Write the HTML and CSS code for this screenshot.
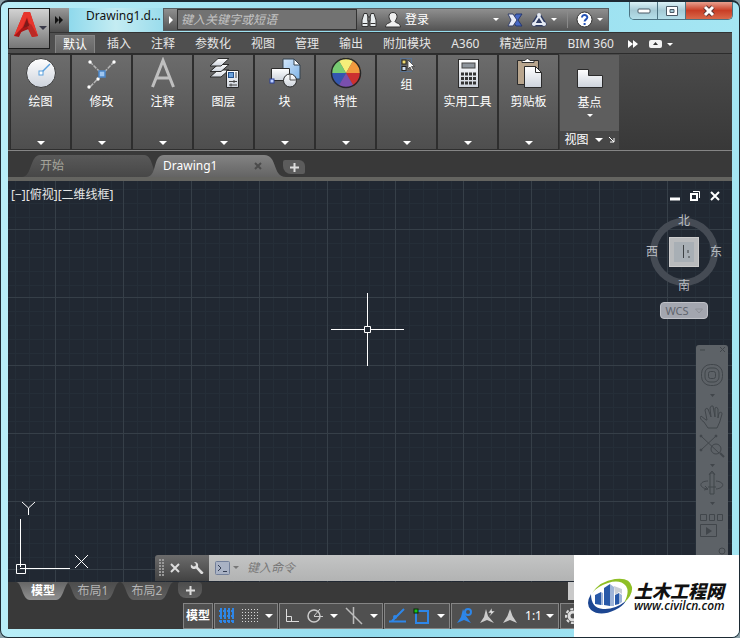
FILE: index.html
```html
<!doctype html>
<html lang="zh-CN">

<head>
    <meta charset="utf-8" />
    <meta name="viewport" content="width=device-width, initial-scale=1" />
    <title>Drawing1.dwg</title>
    <link rel="stylesheet" href="styles.css">
</head>

<body>
    <svg class="defs" width="0" height="0">
        <defs>
            <linearGradient id="paper" x1="0" y1="0" x2="0" y2="1">
                <stop offset="0" stop-color="#fff" />
                <stop offset="1" stop-color="#cdd3dc" />
            </linearGradient>
            <linearGradient id="blue" x1="0" y1="0" x2="1" y2="1">
                <stop offset="0" stop-color="#d5e8fb" />
                <stop offset="1" stop-color="#7fb4e8" />
            </linearGradient>
        </defs>
    </svg>

    <header class="titlebar">
        <button class="app-button" aria-label="应用程序菜单">
            <svg width="39" height="39" viewBox="0 0 39 39">
                <path d="M4 27 L14 3 H20 L28 27 L22 28 L18 20 Q12 20 9 27 Z" fill="#d9241f" />
                <path d="M14 3 H20 L28 27 L23 25 L17 8 L10 23 L4 27 Z" fill="#e8352c" />
                <path d="M4 27 L12 19 L19 14 L21 19 L11 23 L9 28 Z" fill="#a81616" />
                <path d="M17 17 L21 15 L28 27 L22 28 Z" fill="#bc2a25" />
                <path d="M17 9 L13 19 L19 17 Z" fill="#7d1a1a" />
                <path d="M29 17 h8 l-4 4 z" fill="#3b3b4a" />
            </svg>
        </button>
        <button class="quick" aria-label="更多工具">
            <svg width="8" height="8"><path d="M0 0 l4 4 l-4 4z M4 0 l4 4 l-4 4z" fill="#111" /></svg>
        </button>
        <div class="title">Drawing1.d...</div>
        <div class="infocenter">
            <button class="expand" aria-label="展开"><svg width="4" height="8"><path d="M0 0 l4 4 l-4 4z" fill="#fff" /></svg></button>
            <input class="search" type="text" aria-label="搜索" placeholder="键入关键字或短语">
            <button class="tool" aria-label="查找">
                <svg width="16" height="16" viewBox="0 0 16 16" fill="#e8ecee" stroke="#333">
                    <path d="M3 1.5 h3 l1 4 v9 H1 V8z M10 1.5 h3 L15 8 v6.5 H9 v-9z" />
                    <path d="M7 5 h2 v4 h-2z M1.500 11.500 h5 M9.500 11.500 h5" fill="#999" />
                </svg>
            </button>
            <button class="login">
                <svg width="16" height="16" viewBox="0 0 16 16" fill="#f0f0f0" stroke="#333">
                    <path d="M8 .5 c3 0 4 2 4 4 c0 2-1 3-2 5 c1 2 5 1 5.500 5.500 H.5 C1 10.500 5 11.500 6 9.500 C5 8 4 6.500 4 4.500 C4 2.500 5 .5 8 .5z" />
                </svg>
                登录
            </button>
            <span class="caret"></span>
            <button class="tool" aria-label="Exchange">
                <svg width="16" height="16" viewBox="0 0 16 16">
                    <path d="M9 2 h6 l-4 6 l4 6 H9 L5 8z" fill="#4768c4" stroke="#26386f" />
                    <path d="M1 2 h5 l4 6 l-4 6 H1 l3-6z" fill="#e7eaf6" stroke="#34406b" />
                </svg>
            </button>
            <button class="tool share" aria-label="连接">
                <svg width="16" height="16" viewBox="0 0 16 16">
                    <path d="M8 4 L13 12 H3z" fill="none" stroke="#2f3c63" stroke-width="5" stroke-linejoin="round" />
                    <path d="M8 4 L13 12 H3z" fill="none" stroke="#e6ebf4" stroke-width="2" />
                    <g fill="#e6ebf4"><circle cx="8" cy="3" r="2" /><circle cx="3" cy="12" r="2" /><circle cx="13" cy="12" r="2" /></g>
                </svg>
            </button>
            <span class="caret"></span>
            <button class="tool help" aria-label="帮助">
                <svg width="17" height="17" viewBox="0 0 17 17">
                    <circle cx="8.500" cy="8.500" r="7.500" fill="#fff" stroke="#333" />
                    <path d="M6 6.500 C6 3 11.500 3.300 11.300 6.500 C11.200 8.300 8.600 8.500 8.600 10.500 M8.600 12 v2" fill="none" stroke="#2452b5" stroke-width="2" />
                </svg>
            </button>
            <span class="caret"></span>
        </div>
        <div class="window-buttons">
            <button aria-label="最小化"><svg width="14" height="8"><rect x="1" y="2" width="12" height="4" rx="1" fill="#fff" stroke="#4a5a66" /></svg></button>
            <button aria-label="最大化"><svg width="14" height="12"><path d="M1.500 1.500 h11 v9 h-11z M5 4.500 v3 h4 v-3z" fill="#fff" stroke="#4a5a66" fill-rule="evenodd" /></svg></button>
            <button class="close" aria-label="关闭"><svg width="14" height="12" viewBox="0 0 14 12"><path d="M3 2 L11 10 M11 2 L3 10" stroke="#5b3535" stroke-width="5" /><path d="M3 2 L11 10 M11 2 L3 10" stroke="#fff" stroke-width="3" /></svg></button>
        </div>
    </header>

    <main class="window">
        <nav class="ribbon-tabs">
            <button class="active">默认</button>
            <button>插入</button>
            <button>注释</button>
            <button>参数化</button>
            <button>视图</button>
            <button>管理</button>
            <button>输出</button>
            <button>附加模块</button>
            <button>A360</button>
            <button>精选应用</button>
            <button>BIM 360</button>
            <button class="icon-tab" aria-label="更多"><svg width="10" height="8"><path d="M0 0 l5 4 l-5 4z M5 0 l5 4 l-5 4z" fill="#fff" /></svg></button>
            <button class="icon-tab" aria-label="最小化功能区">
                <svg width="13" height="8"><rect width="13" height="8" rx="2" fill="#f2f2f2" /><path d="M4 5 h5 l-2.500-3z" fill="#333" /></svg>
                <span class="caret"></span>
            </button>
        </nav>

        <section class="ribbon">
            <button class="panel">
                <svg width="32" height="32" viewBox="0 0 32 32"><circle cx="16" cy="16" r="14.500" fill="url(#paper)" stroke="#3b3b3b" /><path d="M17 15 L25 7" stroke="#5aa0dd" stroke-width="1.500" /><rect x="14" y="14" width="4" height="4" fill="#fff" stroke="#5aa0dd" /></svg>
                <span>绘图</span><i class="drop"></i>
            </button>
            <button class="panel">
                <svg width="32" height="32" viewBox="0 0 32 32"><path d="M4 5 L16 17 M28 5 L3 31" stroke="#b5b5b5" stroke-width="1.500" stroke-dasharray="4 1" /><g fill="#fff"><circle cx="4" cy="5" r="1.700" /><circle cx="28" cy="5" r="1.700" /><circle cx="3" cy="30" r="1.700" /><circle cx="12" cy="22" r="1.700" /></g><rect x="13" y="14" width="6" height="6" fill="#9fc6f0" stroke="#4b86c9" stroke-width="1.500" /></svg>
                <span>修改</span><i class="drop"></i>
            </button>
            <button class="panel">
                <svg width="32" height="32" viewBox="0 0 32 32"><path d="M5.500 30 L16 3.500 L26.500 30 M9 21 H23" fill="none" stroke="#bfbfbf" stroke-width="3" /></svg>
                <span>注释</span><i class="drop"></i>
            </button>
            <button class="panel">
                <svg width="32" height="32" viewBox="0 0 32 32"><g fill="url(#paper)" stroke="#2b2b2b"><path d="M2 20 l8-7 h11 l-8 7z" /><path d="M2 14.500 l8-7 h11 l-8 7z" /><path d="M2 9 l8-7.500 h11 l-8 7.500z" /><path d="M18.500 13.500 h12 v17 h-12z" /></g><rect x="20.500" y="15.500" width="5" height="5" fill="#6ba2dc" stroke="#26538d" /><path d="M28 15 v6 M21 24.500 h8 M21 28 h8 M26 23 v3 M23 26.500 v3" stroke="#444" /></svg>
                <span>图层</span><i class="drop"></i>
            </button>
            <button class="panel">
                <svg width="32" height="32" viewBox="0 0 32 32"><path d="M14 2 h11 l6 6 v14 H14z" fill="url(#blue)" stroke="#34424f" /><path d="M25 2 v6 h6z" fill="#fff" stroke="#34424f" /><path d="M2.500 11.500 h18 v12 h-18z" fill="url(#paper)" stroke="#2b2b2b" /><circle cx="21" cy="23.500" r="6.500" fill="url(#paper)" stroke="#2b2b2b" /><path d="M21 23 v-6 M21 23 h6" stroke="#555" /><rect x="1" y="22" width="4" height="4" fill="#bcd0ff" stroke="#283f99" /></svg>
                <span>块</span><i class="drop"></i>
            </button>
            <button class="panel">
                <svg width="32" height="32" viewBox="0 0 32 32"><path d="M16 16 L8.500 3 A15 15 0 0 1 23.500 3z" fill="#f6ee7a" /><path d="M16 16 L23.500 3 A15 15 0 0 1 31 16z" fill="#f19a3e" /><path d="M16 16 H31 A15 15 0 0 1 23.500 29z" fill="#cc3030" /><path d="M16 16 L23.500 29 A15 15 0 0 1 8.500 29z" fill="#7a4fae" /><path d="M16 16 L8.500 29 A15 15 0 0 1 1 16z" fill="#3357b0" /><path d="M16 16 H1 A15 15 0 0 1 8.500 3z" fill="#77cc72" /><circle cx="16" cy="16" r="14.500" fill="none" stroke="#272727" stroke-width="1.500" /></svg>
                <span>特性</span><i class="drop"></i>
            </button>
            <button class="panel small">
                <svg width="16" height="16" viewBox="0 0 16 16"><rect x="1.500" y="1.500" width="11" height="13" fill="none" stroke="#4778b8" stroke-dasharray="1 1" /><rect x="3" y="3" width="4" height="4" fill="#f2dc72" stroke="#222" /><rect x="3" y="9.500" width="4" height="4" fill="#cddcf0" stroke="#222" /><path d="M9 3 v9 l2-2 l2 4 l1.500-1 l-2-3.500 h3z" fill="#fff" stroke="#333" stroke-width=".7" /></svg>
                <span>组</span><i class="drop"></i>
            </button>
            <button class="panel">
                <svg width="32" height="32" viewBox="0 0 32 32"><rect x="6.500" y="2.500" width="20" height="28" fill="url(#paper)" stroke="#2b2b2b" /><rect x="10" y="6" width="13" height="5" fill="#8e959c" stroke="#444" /><path d="M9 17 h15 M9 21.500 h15 M9 26 h15" stroke="#333" stroke-width="3" stroke-dasharray="3 1" /></svg>
                <span>实用工具</span><i class="drop"></i>
            </button>
            <button class="panel">
                <svg width="32" height="32" viewBox="0 0 32 32"><path d="M4.500 3.500 h21 v24 h-21z" fill="#b8a58d" stroke="#2b2b2b" /><path d="M9 5.500 v-2 h3 q2.500-4 5 0 h4 v2z" fill="#fff" stroke="#333" /><path d="M11.500 9.500 h11 l6 6 v15 h-17z" fill="url(#paper)" stroke="#2b2b2b" /><path d="M22.500 9.500 v6 h6z" fill="#fff" stroke="#2b2b2b" /></svg>
                <span>剪贴板</span><i class="drop"></i>
            </button>
            <div class="panel view">
                <button class="base">
                    <svg width="32" height="26" viewBox="0 4 32 26"><path d="M3.500 7.500 h11 v6 h14 v12 h-25z" fill="url(#paper)" stroke="#2b2b2b" /></svg>
                    <span>基点</span><i class="caret"></i>
                </button>
                <button class="view-foot">视图 <i class="drop"></i>
                    <svg width="6" height="6"><path d="M0 0 L5 5 M5 1 V5 H1" fill="none" stroke="#fff" /></svg>
                </button>
            </div>
        </section>

        <nav class="file-tabs">
            <button class="file-tab">开始</button>
            <button class="file-tab current">Drawing1
                <svg width="8" height="8"><path d="M1 1 L7 7 M7 1 L1 7" stroke="#4b4b4b" stroke-width="2" /></svg>
            </button>
            <button class="add" aria-label="新图形"><svg width="9" height="9"><path d="M4.500 0 V9 M0 4.500 H9" stroke="#ddd" stroke-width="2" /></svg></button>
        </nav>

        <section class="canvas">
            <div class="view-controls"><button>[−]</button><button>[俯视]</button><button>[二维线框]</button></div>
            <div class="doc-buttons">
                <button aria-label="最小化"><svg width="10" height="10"><path d="M0 8 H10" stroke="#fff" stroke-width="3" /></svg></button>
                <button aria-label="还原"><svg width="10" height="10"><path d="M1 3 H7 V9 H1z" fill="none" stroke="#fff" stroke-width="2" /><path d="M3 .5 H9.500 V7" fill="none" stroke="#fff" /></svg></button>
                <button aria-label="关闭"><svg width="10" height="10"><path d="M1 1 L9 9 M9 1 L1 9" stroke="#fff" stroke-width="2" /></svg></button>
            </div>

            <svg class="crosshair" width="73" height="73"><path d="M36.500 0 V33 M36.500 40 V73 M0 36.500 H33 M40 36.500 H73 M33.500 33.500 h6 v6 h-6z" fill="none" stroke="#fff" /></svg>

            <div class="compass">
                <span class="north">北</span>
                <span class="west">西</span>
                <button class="cube" aria-label="上"><svg width="20" height="20"><rect width="20" height="20" fill="#a8afb5" /><path d="M9.500 3 V16 M14 8 v3 M15 14 v2" stroke="#3c4043" /></svg></button>
                <span class="east">东</span>
                <span class="south">南</span>
            </div>
            <button class="wcs">WCS <svg width="8" height="6"><path d="M.5 1 H7.500 L4 5z" fill="none" stroke="#8e9198" /></svg></button>

            <aside class="navbar">
                <svg width="32" height="226" viewBox="0 0 32 226" fill="none" stroke="#41464b">
                    <path d="M4 5 h5 M24 2 l5 5 M29 2 l-5 5" />
                    <rect x="5.500" y="19.500" width="21" height="21" rx="9" />
                    <rect x="9" y="23" width="14" height="14" rx="5" />
                    <rect x="12.500" y="26.500" width="7" height="7" rx="2" />
                    <path d="M10 75 L5 71 Q3 74 8 77 L12 83 H21 Q24 78 26 69 Q26 66 23 68 L22 73 V64 Q21 61 19 63 V72 L17 61 Q15 60 14 63 L15 72 L12 64 Q10 62 9 65 L11 75z" />
                    <path d="M5 91 L23 108 M20 91 L5 105" />
                    <circle cx="20" cy="104" r="5" /><path d="M24 108 l4 4" stroke-width="2" />
                    <g fill="#41464b"><circle cx="5" cy="91" r="1" /><circle cx="20" cy="91" r="1" /><circle cx="5" cy="105" r="1" /></g>
                    <path d="M14 128 h4 v21 h-4z M13 130 l3-4 l3 4" />
                    <path d="M12 144 C2 143 3 136 12 136 M20 136 C29 137 29 143 20 144 M20 142 L12 142 M9 141 l3 3 l-4 1" />
                    <path d="M4.500 169.500 h6 v6 h-6z M13.500 169.500 h5 v6 h-5z M21.500 169.500 h5 v6 h-5z M4.500 179.500 h16 v12 h-16z" />
                    <path d="M10 182 l6 4 l-6 4z M14 49 h5 l-2.500 3z M14 119 h5 l-2.500 3z M14 157 h5 l-2.500 3z" fill="#41464b" stroke="none" />
                    <circle cx="26" cy="206" r="3" />
                </svg>
            </aside>

            <svg class="ucs" width="76" height="76" viewBox="0 0 76 76" fill="none" stroke="#fff">
                <path d="M5.500 19 V67 M7 68.500 H55 M1.500 64.500 h9 v9 h-9z M5 68.500 h2" />
                <path d="M7 2 L13.500 8 L20 2 M13.500 8 V15 M60 55 L73 68 M73 55 L60 68" />
            </svg>

            <div class="command">
                <div class="command-tools">
                    <svg width="5" height="18"><path d="M1 0 V18 M4 0 V18" stroke="#999" stroke-width="2" stroke-dasharray="2 1" /></svg>
                    <button aria-label="关闭"><svg width="10" height="10"><path d="M1 1 L9 9 M9 1 L1 9" stroke="#ddd" stroke-width="2" /></svg></button>
                    <button aria-label="自定义"><svg width="14" height="14" viewBox="0 0 14 14"><path d="M4 1 L6 3 L5.500 5 L3.500 5.500 L1 3.500 Q0 7 3 8 Q5 8 6 7.500 L11 13 Q13 13.500 13.500 11.500 L8 6 Q9 1 4 1z" fill="#ddd" /></svg></button>
                </div>
                <label class="command-line">
                    <svg width="24" height="14" viewBox="0 0 24 14"><rect x=".5" y=".5" width="14" height="13" rx="1" fill="#a9b2c4" stroke="#73809a" /><path d="M3 4 l3 3 l-3 3 M8 10.500 h4" fill="none" stroke="#333d52" /><path d="M18 5 h6 l-3 3z" fill="#777" /></svg>
                    <input type="text" aria-label="命令行" placeholder="键入命令">
                </label>
            </div>
        </section>

        <nav class="layout-tabs">
            <button class="current">模型</button>
            <button>布局1</button>
            <button>布局2</button>
            <button class="plus" aria-label="新布局"><svg width="9" height="9"><path d="M4.500 0 V9 M0 4.500 H9" stroke="#ddd" stroke-width="2" /></svg></button>
            <div class="scroll-track"></div>
        </nav>

        <footer class="status">
            <div class="group"><button class="model">模型</button></div>
            <div class="group">
                <button aria-label="栅格"><svg width="16" height="16"><path d="M2 0 V16 M6 0 V16 M10 0 V16 M14 0 V16 M0 3 H16 M0 8 H16 M0 13 H16" stroke="#2d86e8" stroke-width="2" stroke-dasharray="3 1" /></svg></button>
                <button aria-label="捕捉"><svg width="16" height="16"><path d="M0 1.500 H16 M0 4.500 H16 M0 7.500 H16 M0 10.500 H16 M0 13.500 H16" stroke="#d8d8d8" stroke-dasharray="1 2" /></svg></button>
                <button aria-label="捕捉设置"><i class="drop"></i></button>
            </div>
            <div class="group">
                <button aria-label="正交"><svg width="16" height="16"><path d="M2.500 1 V13.500 H15 M2.500 8.500 h5 v5" fill="none" stroke="#ddd" /></svg></button>
                <button aria-label="极轴"><svg width="16" height="16"><circle cx="7" cy="8" r="6" fill="none" stroke="#ccc" stroke-width="1.500" /><path d="M7 8.500 H16 M7 8 L13 1" stroke="#ccc" /></svg></button>
                <button aria-label="极轴设置"><i class="drop"></i></button>
                <button aria-label="等轴测"><svg width="18" height="18"><path d="M1 1 L17 17 M8.500 0 V17" stroke="#bbb" stroke-width="1.500" /></svg></button>
                <button aria-label="等轴测设置"><i class="drop"></i></button>
            </div>
            <div class="group">
                <button aria-label="对象追踪"><svg width="17" height="16"><path d="M15 1 L3 13 M0 13.500 H17" stroke="#2d86e8" stroke-width="2" /><circle cx="6" cy="9" r="2" fill="#2d86e8" /></svg></button>
                <button aria-label="对象捕捉"><svg width="17" height="16"><rect x="3" y="3" width="12" height="12" fill="none" stroke="#2d86e8" stroke-width="2" /><rect x="1" y="1" width="4" height="4" fill="#19c819" stroke="#062806" /></svg></button>
                <button aria-label="捕捉选项"><i class="drop"></i></button>
            </div>
            <div class="group">
                <button aria-label="注释可见性"><svg width="16" height="16"><path d="M7 1 L10 8 L15 15 L8 12 L1 15 L5 9z" fill="#2d86e8" /><circle cx="12" cy="4" r="3" fill="#505050" stroke="#2d86e8" stroke-width="2" /></svg></button>
                <button aria-label="自动缩放"><svg width="16" height="16"><path d="M7 1 L9 8 L15 15 L8 12 L1 15 L5 9z" fill="#ccc" /><path d="M13 0 L9 5 h3 l-2 4 l6-6 h-3z" fill="#ddd" stroke="#505050" stroke-width=".5" /></svg></button>
                <button aria-label="注释比例"><svg width="16" height="16"><path d="M8 1 L10.500 8 L15 15 L8 12 L1 15 L5.500 8z" fill="#ccc" /></svg></button>
                <button class="ratio">1:1 <i class="drop"></i></button>
            </div>
            <div class="group last">
                <button aria-label="工作空间"><svg width="16" height="16"><circle cx="8" cy="8" r="4" fill="none" stroke="#ddd" stroke-width="3" /><circle cx="8" cy="8" r="7" fill="none" stroke="#ddd" stroke-width="2" stroke-dasharray="3 2" /></svg></button>
            </div>
        </footer>
    </main>

    <a class="watermark" href="#">
        <svg width="46" height="38" viewBox="0 0 46 38">
            <path d="M4 15 Q12 3 27 1 Q42 -1 44 9 Q45 17 36 25 Q42 14 38 8 Q32 1 20 5 Q10 8 4 15z" fill="#8fbf26" />
            <path d="M3 16 Q-3 26 3 32 Q12 39 27 32 Q34 29 38 23 Q26 32 15 31 Q3 30 3 16z" fill="#1c4691" />
            <path d="M7 17 L13 14 V27 L7 26z M16 10 L22 6 V28 L16 27z M27 17 L31 15 V26 L27 27z" fill="#2859a8" />
            <path d="M22 6 L26 9 V28 L22 28z M13 14 L15 15 V27 L13 27z M31 15 L34 17 V24 L31 26z" fill="#9eb4d8" />
            <path d="M26 8 L34 11 V16 L31 14 L27 17z" fill="#c9ced5" />
        </svg>
        <span class="brand"><strong>土木工程网</strong><em>www.civilcn.com</em></span>
    </a>
</body>

</html>
```
FILE: styles.css
```css
* {
    box-sizing: border-box;
}

html {
    background: #8aa0a8;
}

body {
    margin: 0;
    min-height: 100vh;
    display: flex;
    flex-direction: column;
    position: relative;
    overflow: hidden;
    background: linear-gradient(90deg, #b9eef8, #93dcee 50%, #a5e6f3);
    border: 1px solid #1d2a33;
    border-top-width: 2px;
    border-radius: 8px;
    font-family: "Noto Sans", "Noto Sans CJK SC", sans-serif;
    font-size: 12px;
    line-height: 16px;
    color: #e6e6e6;
}

button {
    font: inherit;
    color: inherit;
    background: none;
    border: 0;
    padding: 0;
    display: flex;
    align-items: center;
    justify-content: center;
    white-space: nowrap;
}

input {
    font: inherit;
    border: 0;
    padding: 0;
    min-width: 0;
}

svg {
    display: block;
    flex: none;
}

.defs {
    position: absolute;
}

.caret {
    border: 3px solid transparent;
    border-top-color: #fff;
    border-bottom: 0;
}

.drop {
    border: 4px solid transparent;
    border-top-color: #fff;
    border-bottom: 0;
}

/* title bar */
.titlebar {
    height: 30px;
    padding-left: 48px;
    display: flex;
}

.app-button {
    position: absolute;
    left: 7px;
    top: 6px;
    z-index: 2;
    width: 42px;
    height: 41px;
    background: linear-gradient(#d2d2d2, #767676);
    border: 1px solid #1c1c1c;
}

.quick {
    width: 20px;
    margin-top: 6px;
    background: linear-gradient(#9a9a9a, #4d4d4d);
}

.title {
    width: 94px;
    margin-top: 6px;
    padding-left: 17px;
    color: #111;
    background: linear-gradient(90deg, #8fd9ec, #c4ecf2 50%, #9adcec);
}

.infocenter {
    flex: 1;
    height: 23px;
    margin-top: 6px;
    padding-right: 5px;
    display: flex;
    align-items: center;
    background: linear-gradient(#8f8f8f, #555);
    border: 1px solid #565c60;
}

.expand {
    width: 13px;
}

.search {
    width: 180px;
    height: 21px;
    padding: 0 3px;
    background: #727272;
    border: 1px solid #333;
    color: #fff;
}

.search::placeholder {
    color: #c4c4c4;
    font-style: italic;
}

.tool {
    margin-left: 4px;
    flex: none;
}

.login {
    gap: 4px;
    margin-left: 8px;
    margin-right: auto;
    color: #fff;
}

.infocenter .caret {
    margin-left: 4px;
}

.infocenter .tool + .tool,
.login ~ .tool {
    margin-left: 8px;
}

.infocenter .help {
    margin-left: 10px;
    padding-left: 8px;
    border-left: 1px solid #8a8a8a;
}

.window-buttons {
    display: flex;
    height: 18px;
    margin: 0 6px 0 20px;
    border: 1px solid #4c7382;
    border-top: 0;
    border-radius: 0 0 5px 5px;
    overflow: hidden;
}

.window-buttons button {
    width: 28px;
    background: linear-gradient(#dcf2f7, #a5cad5 50%, #b4dfe9);
    border-right: 1px solid #4c7382;
}

.window-buttons .close {
    width: 46px;
    background: linear-gradient(#e8a08f, #c93e26 50%, #d9694a);
    border: 0;
}

/* main frame */
.window {
    flex: 1;
    display: flex;
    flex-direction: column;
    margin: 0 7px 8px;
    background: #393939;
}

.ribbon-tabs {
    height: 21px;
    padding-left: 45px;
    display: flex;
    align-items: flex-end;
    background: #4f4f4f;
    border-top: 1px solid #333;
}

.ribbon-tabs button {
    height: 18px;
    margin: 0 2px;
    padding: 0 8px;
}

.ribbon-tabs .active {
    background: linear-gradient(#7b7b7b, #646464);
    border: 1px solid #858585;
    border-bottom: 0;
    padding: 0 7px;
    color: #fff;
}

.ribbon-tabs .icon-tab {
    padding: 0 2px;
    gap: 5px;
    margin-right: 5px;
}

.ribbon {
    height: 98px;
    padding: 1px 3px;
    display: flex;
    gap: 2px;
    background: linear-gradient(#4b4b4b, #383838);
    border-top: 1px solid #2c2c2c;
    border-bottom: 1px solid #858585;
}

.panel {
    width: 59px;
    padding: 2px 0 4px;
    display: flex;
    flex-direction: column;
    align-items: center;
    justify-content: flex-start;
    gap: 4px;
    background: linear-gradient(#6c6c6c, #4e4e4e);
    outline: 1px solid #2e2e2e;
}

.panel .drop {
    margin-top: auto;
}

.panel > span,
.base > span {
    line-height: 18px;
    color: #fff;
}

.small {
    gap: 3px;
}

.view {
    padding: 0;
    background: #5e5e5e;
    outline: 0;
}

.base {
    flex: 1;
    flex-direction: column;
    gap: 2px;
}

.view-foot {
    width: 100%;
    height: 18px;
    gap: 6px;
    background: #474747;
    color: #fff;
}

.view-foot .drop {
    margin: 0;
}

/* drawing tabs */
.file-tabs {
    height: 30px;
    padding: 4px 0 0 14px;
    display: flex;
    align-items: flex-start;
    background: #393939;
    border-bottom: 4px solid #646460;
}

.file-tab {
    width: 138px;
    height: 22px;
    padding: 0 18px;
    justify-content: flex-start;
    color: #a6a69c;
    background: linear-gradient(#595959, #474747);
    clip-path: path("M0 22 C10 22 8 0 18 0 H122 C132 0 130 22 138 22 Z");
}

.file-tab.current {
    width: 140px;
    margin-left: -14px;
    padding: 0 24px 0 17px;
    justify-content: space-between;
    color: #fff;
    background: linear-gradient(#838383, #646464);
    clip-path: path("M0 22 C12 22 6 0 18 0 H118 C132 0 126 22 140 22 Z");
}

.add {
    width: 22px;
    height: 14px;
    margin: 5px 0 0 -3px;
    background: #5c5c5c;
    border-radius: 2px 6px 2px 8px;
}

/* drawing area */
.canvas {
    flex: 1;
    min-height: 401px;
    position: relative;
    overflow: hidden;
    padding: 6px 12px 0 3px;
    display: flex;
    justify-content: space-between;
    align-items: flex-start;
    background-color: #212832;
    background-image:
        linear-gradient(90deg, #363f48 1px, transparent 1px),
        linear-gradient(#363f48 1px, transparent 1px),
        repeating-linear-gradient(90deg, #252e38 0 1px, transparent 1px 14px),
        repeating-linear-gradient(#252e38 0 1px, transparent 1px 14px);
    background-size: 68px 68px;
    background-position: 47px 48px;
}

.view-controls,
.doc-buttons {
    display: flex;
}

.doc-buttons {
    gap: 10px;
    padding-top: 4px;
}

.crosshair {
    position: absolute;
    left: 323px;
    top: 112px;
}

.compass {
    position: absolute;
    right: 14px;
    top: 37px;
    width: 68px;
    height: 68px;
    display: grid;
    place-items: center;
    border: 7px solid #454b54;
    border-radius: 50%;
    color: #b9bdc2;
}

.compass span {
    position: absolute;
}

.north {
    top: -12px;
}

.south {
    bottom: -15px;
}

.west {
    left: -11px;
}

.east {
    right: -11px;
}

.cube {
    width: 30px;
    height: 30px;
    background: #b9bbbd;
    border: 1px solid #ccc;
}

.wcs {
    position: absolute;
    right: 24px;
    top: 121px;
    width: 48px;
    height: 17px;
    gap: 6px;
    background: #a3a6af;
    border: 1px solid #c0c2c8;
    border-radius: 4px;
    color: #60646d;
    font-size: 11px;
}

.navbar {
    position: absolute;
    right: 4px;
    top: 164px;
    bottom: 0;
    width: 32px;
    background: #5d6267;
    border-radius: 3px 3px 0 0;
}

.ucs {
    position: absolute;
    left: 7px;
    bottom: 6px;
}

.command {
    position: absolute;
    left: 147px;
    right: 120px;
    bottom: 1px;
    height: 26px;
    display: flex;
}

.command-tools {
    width: 54px;
    padding-left: 4px;
    display: flex;
    align-items: center;
    gap: 6px;
    background: linear-gradient(#6c6c6c, #424242);
    border-radius: 3px 0 0 0;
}

.command-tools button + button {
    margin-left: 4px;
}

.command-line {
    flex: 1;
    padding-left: 6px;
    display: flex;
    align-items: center;
    gap: 8px;
    background: linear-gradient(#c3c4c4, #b2b3b3);
}

.command-line input {
    flex: 1;
    background: none;
}

.command-line input::placeholder {
    color: #777;
    font-style: italic;
}

/* layout tabs */
.layout-tabs {
    height: 21px;
    padding-left: 8px;
    display: flex;
}

.layout-tabs button {
    width: 54px;
    height: 18px;
    color: #b5b5b5;
    background: linear-gradient(#4c4c4c, #606060);
    clip-path: path("M0 0 H54 C48 0 48 18 40 18 H14 C6 18 6 0 0 0 Z");
}

.layout-tabs .current {
    margin-right: -4px;
    color: #fff;
    font-weight: bold;
    background: linear-gradient(#666, #909090);
}

.layout-tabs .plus {
    width: 24px;
    height: 16px;
    margin-left: 4px;
    clip-path: none;
    border-radius: 2px 4px 8px 8px;
}

.scroll-track {
    width: 164px;
    height: 18px;
    margin-left: auto;
    background: #c9c9c9;
}

/* status bar */
.status {
    height: 26px;
    padding-left: 175px;
    display: flex;
    overflow: hidden;
}

.group {
    flex: none;
    padding: 0 4px;
    display: flex;
    align-items: center;
    gap: 7px;
    background: #505050;
    border: 1px solid #858585;
    margin-right: 1px;
}

.group:first-child {
    padding: 0 2px;
}

.model {
    color: #fff;
    font-weight: bold;
}

.ratio {
    gap: 4px;
    color: #fff;
}

.last {
    flex: 1;
}

/* site badge */
.watermark {
    position: absolute;
    right: -1px;
    bottom: -1px;
    z-index: 3;
    width: 166px;
    height: 83px;
    padding-left: 14px;
    display: flex;
    align-items: center;
    background: #fff;
    color: #111;
    text-decoration: none;
}

.brand {
    display: flex;
    flex-direction: column;
    font-style: italic;
}

.brand strong {
    font-family: "Noto Sans CJK SC", sans-serif;
    font-size: 18px;
    font-weight: 900;
    line-height: 18px;
}

.brand em {
    font-family: "Open Sans", sans-serif;
    font-size: 12px;
    font-weight: 600;
    line-height: 14px;
}
```
